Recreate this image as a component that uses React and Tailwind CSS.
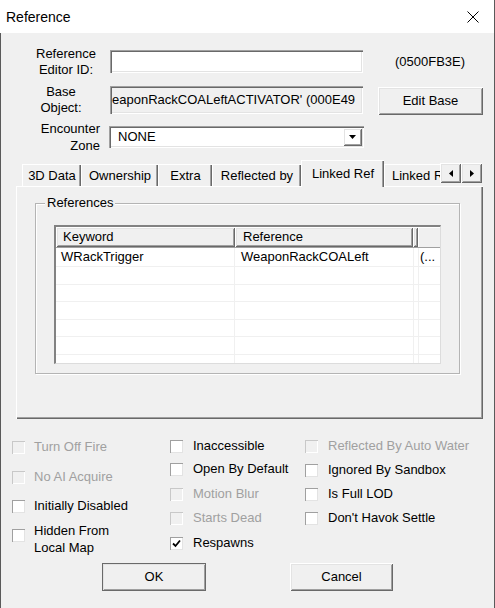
const sunken =
  "shadow-[inset_1px_1px_0_#a0a0a0,inset_2px_2px_0_#696969,inset_-1px_-1px_0_#ffffff,inset_-2px_-2px_0_#e3e3e3]";
const raised =
  "shadow-[inset_1px_1px_0_#ffffff,inset_-1px_-1px_0_#696969,inset_2px_2px_0_#e3e3e3,inset_-2px_-2px_0_#a0a0a0]";

const Check = ({ label, disabled, checked, gap = "gap-[10px]", className = "" }) => (
  <div className={`flex items-center h-[16px] ${gap} ${className}`}>
    <div
      className={`w-[13px] h-[13px] shrink-0 flex items-center justify-center ${
        disabled
          ? "bg-[#f0f0f0] shadow-[inset_1px_1px_0_#c8c8c8,inset_-1px_-1px_0_#ffffff]"
          : "bg-white shadow-[inset_1px_1px_0_#a0a0a0,inset_-1px_-1px_0_#e3e3e3]"
      }`}
    >
      {checked && (
        <svg width="9" height="9" viewBox="0 0 9 9">
          <path d="M1 4.5 L3.5 7 L8 1.5" stroke="#000" strokeWidth="1.8" fill="none" />
        </svg>
      )}
    </div>
    <span className={`whitespace-nowrap ${disabled ? "text-[#a0a0a0]" : "text-black"}`}>{label}</span>
  </div>
);

const Tab = ({ label, width, active }) =>
  active ? (
    <div
      className={`${width} h-[27px] shrink-0 bg-[#f0f0f0] flex justify-center pt-[5px] border-t border-l border-white shadow-[inset_-1px_0_0_#696969,inset_-2px_0_0_#a0a0a0]`}
    >
      {label}
    </div>
  ) : (
    <div
      className={`${width} h-[22px] mb-[1px] shrink-0 flex justify-center pt-[3px] border-t border-l border-white shadow-[inset_-1px_0_0_#696969,inset_-2px_0_0_#a0a0a0] whitespace-nowrap overflow-hidden`}
    >
      {label}
    </div>
  );

const Btn = ({ label, width, def }) => (
  <div
    className={`${width} h-[28px] flex items-center justify-center ${raised} ${
      def ? "outline outline-1 outline-[#6a6a6a] -outline-offset-1" : ""
    }`}
  >
    {label}
  </div>
);

const rows = [
  ["WRackTrigger", "WeaponRackCOALeft", "(..."],
  ["", "", ""],
  ["", "", ""],
  ["", "", ""],
  ["", "", ""],
  ["", "", ""],
  ["", "", ""],
];

export default function App() {
  return (
    <div className="w-[495px] h-[608px] overflow-hidden flex flex-col bg-[#f0f0f0] border-r border-[#5a5a5a] text-[13px] leading-[16px] text-black font-['Liberation_Sans',Arial,sans-serif]">
      {/* title bar */}
      <div className="h-[33px] shrink-0 bg-white flex items-center justify-between pl-[6px] pr-[15px]">
        <span className="text-[14px]">Reference</span>
        <svg width="12" height="12" viewBox="0 0 12 12">
          <path d="M0.5 0.5 L11.5 11.5 M11.5 0.5 L0.5 11.5" stroke="#000" strokeWidth="1" />
        </svg>
      </div>

      <div className="flex-1 flex flex-col border-l border-[#5a5a5a]">
        {/* Reference Editor ID */}
        <div className="flex items-center h-[23px] mt-[17px]">
          <div className="w-[72px] ml-[29px] text-center">
            Reference
            <br />
            Editor ID:
          </div>
          <div className={`w-[253px] h-[23px] ml-[8px] bg-white ${sunken}`} />
          <span className="ml-[32px]">(0500FB3E)</span>
        </div>

        {/* Base Object */}
        <div className="flex items-center h-[29px] mt-[12px]">
          <div className="w-[72px] ml-[24px] text-center">
            Base
            <br />
            Object:
          </div>
          <div
            className={`w-[253px] h-[28px] ml-[13px] bg-[#f0f0f0] ${sunken} overflow-hidden whitespace-nowrap flex items-center pl-[2px]`}
          >
            eaponRackCOALeftACTIVATOR' (000E49
          </div>
          <div className="ml-[15px] mt-[2px]">
            <Btn label="Edit Base" width="w-[105px]" />
          </div>
        </div>

        {/* Encounter Zone */}
        <div className="flex items-center h-[22px] mt-[12px]">
          <div className="w-[72px] ml-[27px] text-right leading-[17px]">
            Encounter
            <br />
            Zone
          </div>
          <div className={`w-[255px] h-[22px] ml-[9px] bg-white ${sunken} flex items-center pl-[9px] pr-[2px]`}>
            <span className="flex-1">NONE</span>
            <div className={`w-[19px] h-[18px] flex items-center justify-center ${raised}`}>
              <svg width="7" height="4" viewBox="0 0 7 4">
                <path d="M0 0 H7 L3.5 4 Z" fill="#000" />
              </svg>
            </div>
          </div>
        </div>

        {/* tabs */}
        <div className="relative ml-[15px] mt-[12px] w-[467px]">
          <div className="relative z-10 ml-[6px] w-[419px] h-[27px] -mb-px flex items-end overflow-hidden">
            <Tab label="3D Data" width="w-[59px]" />
            <Tab label="Ownership" width="w-[77px]" />
            <Tab label="Extra" width="w-[54px]" />
            <Tab label="Reflected by" width="w-[89px]" />
            <Tab label="Linked Ref" width="w-[83px]" active />
            <div className="w-[83px] h-[22px] mb-[1px] shrink-0 pt-[3px] pl-[7px] border-t border-l border-white whitespace-nowrap">
              Linked Ref
            </div>
          </div>
          <div className="absolute top-[3px] left-[424px] z-20 flex">
            <div className={`w-[21px] h-[20px] flex items-center justify-center ${raised}`}>
              <svg width="4" height="7" viewBox="0 0 4 7">
                <path d="M4 0 V7 L0 3.5 Z" fill="#000" />
              </svg>
            </div>
            <div className={`w-[21px] h-[20px] flex items-center justify-center ${raised}`}>
              <svg width="4" height="7" viewBox="0 0 4 7">
                <path d="M0 0 V7 L4 3.5 Z" fill="#000" />
              </svg>
            </div>
          </div>

          {/* panel */}
          <div className="h-[233px] pt-[17px] pl-[19px] shadow-[inset_1px_1px_0_#ffffff,inset_-1px_-1px_0_#696969,inset_-2px_-2px_0_#a0a0a0]">
            <div className="relative w-[425px] h-[171px] border border-[#b4b4b4] shadow-[inset_1px_1px_0_#ffffff,1px_1px_0_#ffffff] pt-[21px] pl-[18px]">
              <span className="absolute -top-[9px] left-[9px] px-[2px] bg-[#f0f0f0]">References</span>

              {/* list view */}
              <div className="w-[387px] h-[139px] bg-white overflow-hidden border-t-2 border-l-2 border-t-[#828282] border-l-[#828282] border-r border-b border-r-[#dcdcdc] border-b-[#dcdcdc]">
                <div className="flex h-[21px] bg-[#f0f0f0] border-b border-[#a0a0a0]">
                  <div className={`w-[179px] shrink-0 flex items-center pl-[7px] ${raised}`}>Keyword</div>
                  <div className={`w-[178px] shrink-0 flex items-center pl-[8px] ${raised}`}>Reference</div>
                  <div className={`w-[5px] shrink-0 ${raised}`} />
                  <div className="flex-1 shadow-[inset_1px_1px_0_#ffffff]" />
                </div>
                {rows.map((r, i) => (
                  <div
                    key={i}
                    className={`flex border-b border-[#f0f0f0] ${i === 0 ? "h-[19px]" : "h-[17.5px]"}`}
                  >
                    <div className="w-[179px] shrink-0 pl-[5px] flex items-center border-r border-[#f0f0f0]">{r[0]}</div>
                    <div className="w-[179px] shrink-0 pl-[6px] flex items-center border-r border-[#f0f0f0]">{r[1]}</div>
                    <div className="w-[5px] shrink-0 border-r border-[#f0f0f0]" />
                    <div className="flex-1 pl-[1px] flex items-center whitespace-nowrap">{r[2]}</div>
                  </div>
                ))}
              </div>
            </div>
          </div>
        </div>

        {/* checkboxes */}
        <div className="grid grid-cols-[158px_135px_1fr] pl-[11px] mt-[19px] h-[125px]">
          <div className="flex flex-col">
            <Check label="Turn Off Fire" disabled gap="gap-[9px]" className="mt-[1px]" />
            <Check label="No AI Acquire" disabled gap="gap-[9px]" className="mt-[14px]" />
            <Check label="Initially Disabled" gap="gap-[9px]" className="mt-[13px]" />
            <div className="flex items-start gap-[9px] mt-[8px]">
              <div className="w-[13px] h-[13px] mt-[7px] shrink-0 bg-white shadow-[inset_1px_1px_0_#a0a0a0,inset_-1px_-1px_0_#e3e3e3]" />
              <span className="leading-[17px]">
                Hidden From
                <br />
                Local Map
              </span>
            </div>
          </div>
          <div className="flex flex-col">
            <Check label="Inaccessible" />
            <Check label="Open By Default" className="mt-[7px]" />
            <Check label="Motion Blur" disabled className="mt-[9px]" />
            <Check label="Starts Dead" disabled className="mt-[8px]" />
            <Check label="Respawns" checked className="mt-[9px]" />
          </div>
          <div className="flex flex-col">
            <Check label="Reflected By Auto Water" disabled />
            <Check label="Ignored By Sandbox" className="mt-[8px]" />
            <Check label="Is Full LOD" className="mt-[8px]" />
            <Check label="Don't Havok Settle" className="mt-[8px]" />
          </div>
        </div>

        {/* buttons */}
        <div className="flex ml-[101px] mt-[0px]">
          <Btn label="OK" width="w-[104px]" def />
          <div className="ml-[84px]">
            <Btn label="Cancel" width="w-[103px]" />
          </div>
        </div>
      </div>
    </div>
  );
}
